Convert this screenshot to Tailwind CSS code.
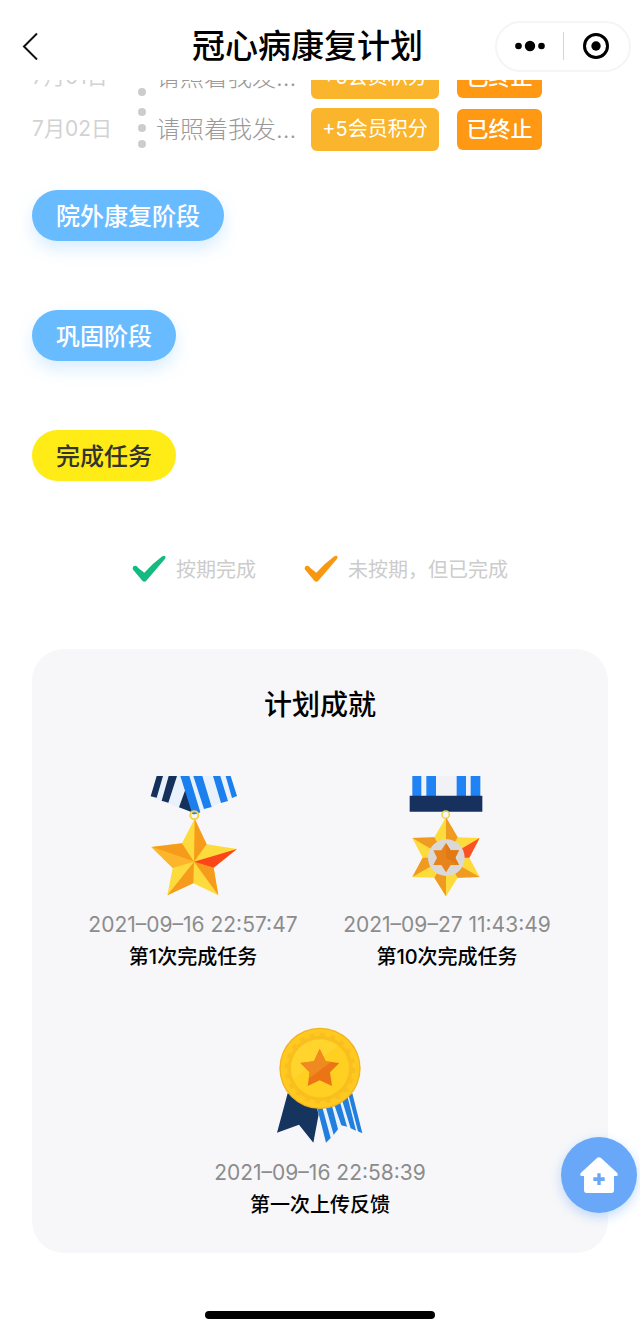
<!DOCTYPE html>
<html lang="zh-CN">
<head>
    <meta charset="UTF-8">
    <meta name="viewport" content="width=device-width, initial-scale=1.0">
    <title>冠心病康复计划</title>
    <script src="https://cdn.jsdelivr.net/npm/@tailwindcss/browser@4"></script>
</head>
<body class="bg-white min-h-screen flex flex-col font-['Inter','Noto_Sans_CJK_SC',sans-serif]">
    <header class="relative z-10 bg-white h-20 pt-3 pr-[9px] flex items-center">
        <button type="button" aria-label="返回" class="w-[120px] h-14 pl-5 flex items-center">
            <svg class="w-5 h-7" viewBox="0 0 20 28" fill="none" stroke="#111" stroke-width="2">
                <path d="M17 1.5 4 14.5 17 27.5"/>
            </svg>
        </button>
        <h1 class="flex-1 text-center text-[33px] leading-10 font-medium text-black whitespace-nowrap">冠心病康复计划</h1>
        <div class="w-[136px] h-[51px] rounded-full border-2 border-[#f5f5f5] flex items-center">
            <button type="button" aria-label="更多" class="flex-1 h-full flex items-center justify-center">
                <svg class="w-8 h-3" viewBox="0 0 32 12" fill="#000">
                    <circle cx="4.500" cy="6" r="3.300"/>
                    <circle cx="16" cy="6" r="5.200"/>
                    <circle cx="27.500" cy="6" r="3.300"/>
                </svg>
            </button>
            <span class="w-px h-7 bg-gray-300"></span>
            <button type="button" aria-label="关闭" class="flex-1 h-full flex items-center justify-center">
                <svg class="w-7 h-7" viewBox="0 0 28 28">
                    <circle cx="14" cy="14" r="11.500" fill="none" stroke="#000" stroke-width="3"/>
                    <circle cx="14" cy="14" r="4.700" fill="#000"/>
                </svg>
            </button>
        </div>
    </header>

    <main class="flex-1 px-8">
        <!-- 每日任务 -->
        <ul class="-mt-[29px]">
            <li class="h-[52px] flex items-center">
                <span class="w-[104px] text-[21px] text-[#d2d2d2]">7月01日</span>
                <span class="w-5 flex flex-col gap-2 pl-[2px] pb-[2px]">
                    <i class="size-2 rounded-full bg-[#ccc]"></i>
                    <i class="size-2 rounded-full bg-[#ccc]"></i>
                    <i class="size-2 rounded-full bg-[#ccc]"></i>
                </span>
                <span class="w-[155px] pt-[2px] text-[24px] text-[#999] font-light whitespace-nowrap">请照着我发...</span>
                <button type="button" class="w-32 h-[43px] rounded-md bg-[#fab52c] text-white text-[20px]">+5会员积分</button>
                <button type="button" class="ml-[18px] w-[85px] h-[41px] rounded-md bg-[#ff9812] text-white text-[22px] font-medium">已终止</button>
            </li>
            <li class="h-[52px] flex items-center">
                <span class="w-[104px] text-[21px] text-[#d2d2d2]">7月02日</span>
                <span class="w-5 flex flex-col gap-2 pl-[2px] pb-[2px]">
                    <i class="size-2 rounded-full bg-[#ccc]"></i>
                    <i class="size-2 rounded-full bg-[#ccc]"></i>
                    <i class="size-2 rounded-full bg-[#ccc]"></i>
                </span>
                <span class="w-[155px] pt-[2px] text-[24px] text-[#999] font-light whitespace-nowrap">请照着我发...</span>
                <button type="button" class="w-32 h-[43px] rounded-md bg-[#fab52c] text-white text-[20px]">+5会员积分</button>
                <button type="button" class="ml-[18px] w-[85px] h-[41px] rounded-md bg-[#ff9812] text-white text-[22px] font-medium">已终止</button>
            </li>
        </ul>

        <!-- 阶段 -->
        <div class="mt-[35px] flex flex-col items-start gap-[69px]">
            <button type="button" class="h-[51px] px-6 pt-[2px] rounded-full bg-[#69bbff] text-white text-[24px] font-medium shadow-[0_8px_16px_#69bbff40]">院外康复阶段</button>
            <button type="button" class="h-[51px] px-6 pt-[2px] rounded-full bg-[#69bbff] text-white text-[24px] font-medium shadow-[0_8px_16px_#69bbff40]">巩固阶段</button>
            <button type="button" class="h-[51px] px-6 pt-[2px] rounded-full bg-[#ffeb15] text-[#333] text-[24px] font-medium">完成任务</button>
        </div>

        <!-- 图例 -->
        <div class="mt-[71px] flex justify-center gap-12 text-[20px] leading-8 text-[#ccc]">
            <span class="flex items-center gap-[10px]">
                <svg class="w-[34px] h-7" viewBox="0 0 102 84" fill="#14bb80">
                    <path d="M2 39Q3 31 11 32Q16 33 19 39L37 53Q60 27 91 4Q97 0 100 4Q102 8 98 13L43 77Q37 83 31 77L4 45Q2 43 2 39Z"/>
                </svg>
                <span class="pt-[2px]">按期完成</span>
            </span>
            <span class="flex items-center gap-[10px]">
                <svg class="w-[34px] h-7" viewBox="0 0 102 84" fill="#f99711">
                    <path d="M2 39Q3 31 11 32Q16 33 19 39L37 53Q60 27 91 4Q97 0 100 4Q102 8 98 13L43 77Q37 83 31 77L4 45Q2 43 2 39Z"/>
                </svg>
                <span class="pt-[2px]">未按期，但已完成</span>
            </span>
        </div>

        <!-- 计划成就 -->
        <section class="mt-[63px] rounded-[32px] bg-[#f7f7f9] pt-9 pb-8">
            <h2 class="text-center text-[28px] leading-10 font-medium text-black">计划成就</h2>
            <div class="mt-[51px] flex flex-wrap justify-center gap-y-[51px]">
                <figure class="w-[254px] flex flex-col items-center">
                    <svg class="w-[110px] h-[120px]" viewBox="-6 33 330 360">
                        <path fill="#e9f1fc" d="M51 33H130L160 140 117 128 33 96Z"/>
                        <path fill="#14305b" d="M50 33H69L50 98 32 94ZM86 33H111L85 113 65 107ZM136 74 166 120 152 140 117 127Z"/>
                        <path fill="#e9f1fc" d="M145 33H268L291 94 175 140Z"/>
                        <path fill="#1b7fee" d="M121 33H148L181 142Q168 150 157 147ZM160 33H187L215 126 192 132ZM219 33H241L264 108 243 114ZM257 33H272L291 93 276 99Z"/>
                        <circle cx="163" cy="151" r="12" fill="none" stroke="#f7d243" stroke-width="6"/>
                        <path fill="#fedb3c" d="M164 161 200 238 291 252 221 308 235 391 160 355 82 391 98 309 34 246 126 235Z"/>
                        <path fill="#f79b1c" d="M164 161 200 238 162 290ZM34 246 126 235 162 290ZM221 308 235 391 162 290ZM160 355 82 391 162 290Z"/>
                        <path fill="#fdb62b" d="M34 246 98 309 162 290Z"/>
                        <path fill="#fb4619" d="M291 252 221 308 162 290Z"/>
                    </svg>
                    <figcaption class="mt-[13px] text-center text-[20px] leading-8">
                        <time class="block text-[21px] text-[#8c8c8c]">2021–09–16 22:57:47</time>
                        <span class="block font-medium text-black">第1次完成任务</span>
                    </figcaption>
                </figure>
                <figure class="w-[254px] flex flex-col items-center">
                    <svg class="w-[110px] h-[120px]" viewBox="-9 33 330 360">
                        <path fill="#f0f2f6" d="M52 33H256V94H52Z"/>
                        <path fill="#1f82f5" d="M52 33H79V94H52ZM94 33H123V94H94ZM185 33H213V94H185ZM227 33H256V94H227Z"/>
                        <path fill="#16315e" d="M44 92H262V140H44Z"/>
                        <circle cx="152" cy="149" r="11" fill="none" stroke="#f2d550" stroke-width="5"/>
                        <path fill="#fedb3c" d="M153 157 188 217 254 219 223 278 254 336 188 338 153 394 118 338 52 336 83 278 52 219 118 217Z"/>
                        <path fill="#f09a21" d="M153 157 188 217 153 278ZM52 219 118 217 153 278ZM52 336 83 278 153 278ZM153 394 118 338 153 278ZM254 336 188 338 153 278Z"/>
                        <path fill="#fb5225" d="M254 219 223 278 153 278Z"/>
                        <circle cx="154" cy="278" r="55" fill="#dbd9d8"/>
                        <path fill="#e8821a" d="M153 234 167 256 192 256 181 278 192 300 167 300 153 322 139 300 115 300 126 278 115 256 139 256Z"/>
                        <path fill="#e17914" d="M153 234 167 256 192 256 181 278 192 300 153 278Z"/>
                    </svg>
                    <figcaption class="mt-[13px] text-center text-[20px] leading-8">
                        <time class="block text-[21px] text-[#8c8c8c]">2021–09–27 11:43:49</time>
                        <span class="block font-medium text-black">第10次完成任务</span>
                    </figcaption>
                </figure>
                <figure class="w-[254px] flex flex-col items-center">
                    <svg class="w-[110px] h-[120px]" viewBox="0 12 330 360">
                        <path fill="#15355f" d="M68 220 165 262 145 368 102 314 36 338Z"/>
                        <path fill="#e9f2fe" d="M156 266 260 224 292 340 235 315 187 368Z"/>
                        <path fill="#237fde" d="M156 262H172L197 354 183 368ZM182 260 200 254 219 328 206 344ZM207 252 225 246 246 320 229 316ZM231 240 248 232 273 332 257 325ZM251 228 262 220 292 340 279 334Z"/>
                        <circle cx="165" cy="145" r="122" fill="#f2b421"/>
                        <circle cx="165" cy="145" r="118" fill="#ffc91f"/>
                        <circle cx="165" cy="145" r="98" fill="#f9bf1f"/>
                        <circle cx="165" cy="145" r="100" fill="none" stroke="#f9bf1f" stroke-width="12" stroke-dasharray="14 17.416"/>
                        <circle cx="165" cy="145" r="87" fill="#ffcf22"/>
                        <path fill="#ffda38" opacity=".5" d="M84 177A87 87 0 0 1 219 77Z"/>
                        <path fill="#ed7415" d="M164 87 182 124 223 129 195 157 201 198 164 181 128 198 134 157 106 129 147 124Z"/>
                        <path fill="#ee8a20" d="M164 87 182 124 198 126 131 176 134 157 106 129 147 124Z"/>
                    </svg>
                    <figcaption class="mt-[13px] text-center text-[20px] leading-8">
                        <time class="block text-[21px] text-[#8c8c8c]">2021–09–16 22:58:39</time>
                        <span class="block font-medium text-black">第一次上传反馈</span>
                    </figcaption>
                </figure>
            </div>
        </section>
    </main>

    <footer class="pt-[58px] pb-[10px] flex justify-center">
        <div class="w-[230px] h-2 rounded-full bg-black"></div>
    </footer>

    <a href="#" aria-label="首页" class="fixed right-[3px] bottom-[116px] size-[76px] rounded-full bg-[#69a8f8] shadow-[0_4px_12px_#69a8f866] flex items-center justify-center">
        <svg class="w-[38px] h-9" viewBox="0 0 114 108">
            <path fill="#fff" d="M51 3Q57-2 63 3L111 47Q117 56 108 57H102V99Q102 108 94 108H20Q12 108 12 99V57H6Q-3 56 3 47Z"/>
            <path fill="#69a8f8" d="M52 49H62V61H74V72H62V84H52V72H40V61H52Z"/>
        </svg>
    </a>
</body>
</html>
